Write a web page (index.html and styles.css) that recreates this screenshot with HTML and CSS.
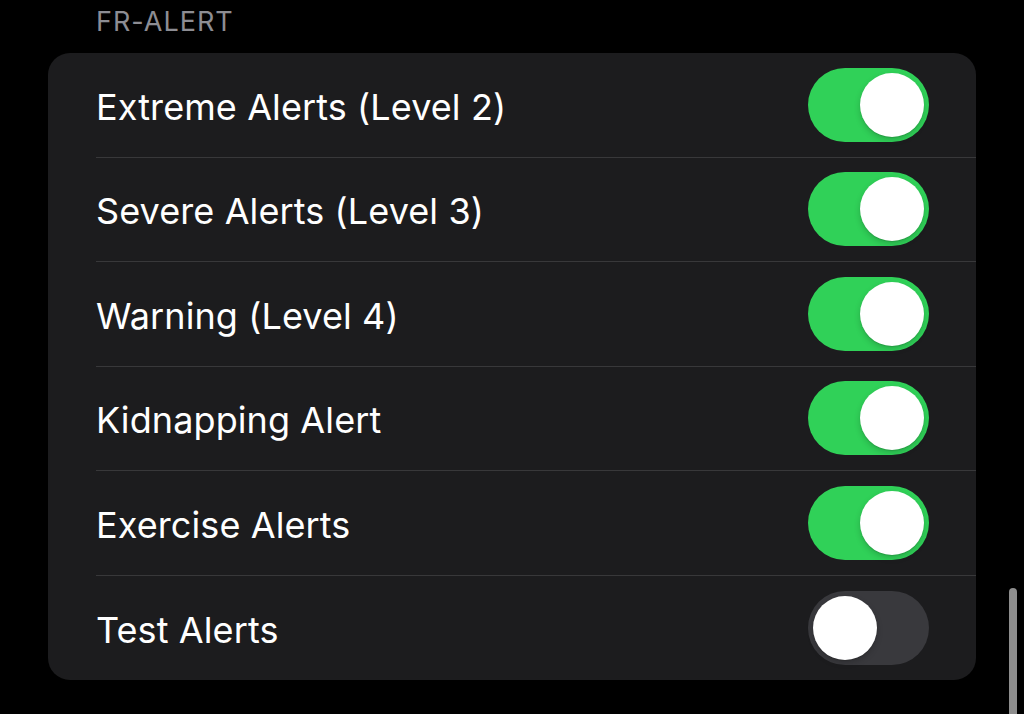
FILE: index.html
```html
<!DOCTYPE html>
<html lang="en">
<head>
<meta charset="utf-8">
<title>FR-Alert</title>
<link rel="stylesheet" href="styles.css">
</head>
<body>
<div class="page">
  <div class="section-header">FR-ALERT</div>
  <div class="card">
    <div class="row"><span class="label">Extreme Alerts (Level 2)</span><span class="toggle on"><span class="knob"></span></span></div>
    <div class="row"><span class="label">Severe Alerts (Level 3)</span><span class="toggle on"><span class="knob"></span></span></div>
    <div class="row"><span class="label">Warning (Level 4)</span><span class="toggle on"><span class="knob"></span></span></div>
    <div class="row"><span class="label">Kidnapping Alert</span><span class="toggle on"><span class="knob"></span></span></div>
    <div class="row"><span class="label">Exercise Alerts</span><span class="toggle on"><span class="knob"></span></span></div>
    <div class="row"><span class="label">Test Alerts</span><span class="toggle off"><span class="knob"></span></span></div>
  </div>
  <div class="scroll-indicator"></div>
</div>
</body>
</html>
```

FILE: styles.css
```css
html, body {
  margin: 0;
  padding: 0;
  background: #000;
}
body {
  font-family: Inter, "Noto Sans", "Liberation Sans", sans-serif;
  color: #fff;
  width: 1024px;
  height: 714px;
  overflow: hidden;
}
.page {
  position: relative;
  width: 1024px;
  height: 714px;
}
.section-header {
  height: 53px;
  box-sizing: border-box;
  padding-left: 96px;
  padding-top: 5px;
  font-size: 27px;
  line-height: 33px;
  color: #8d8d93;
  letter-spacing: 1px;
}
.card {
  margin-left: 48px;
  width: 928px;
  background: #1c1c1e;
  border-radius: 22px;
  overflow: hidden;
}
.row {
  height: 104.5px;
  box-sizing: border-box;
  margin-left: 48px;
  padding-right: 47px;
  display: flex;
  align-items: center;
  justify-content: space-between;
  border-bottom: 1px solid #38383a;
}
.row:last-child {
  border-bottom: none;
}
.label {
  font-size: 36px;
  line-height: 44px;
  padding-top: 4px;
  letter-spacing: 0.1px;
}
.toggle {
  width: 121px;
  height: 74px;
  border-radius: 37px;
  box-sizing: border-box;
  padding: 5px;
  display: flex;
  flex-shrink: 0;
}
.toggle.on {
  background: #30d158;
  justify-content: flex-end;
}
.toggle.off {
  background: #39393d;
  justify-content: flex-start;
}
.knob {
  width: 64px;
  height: 64px;
  border-radius: 50%;
  background: #fff;
  box-shadow: 0 3px 6px rgba(0,0,0,0.18), 0 1px 1px rgba(0,0,0,0.12);
}
.scroll-indicator {
  position: absolute;
  left: 1009px;
  top: 588px;
  width: 8px;
  height: 140px;
  border-radius: 4px;
  background: #8e8e8e;
}
```
